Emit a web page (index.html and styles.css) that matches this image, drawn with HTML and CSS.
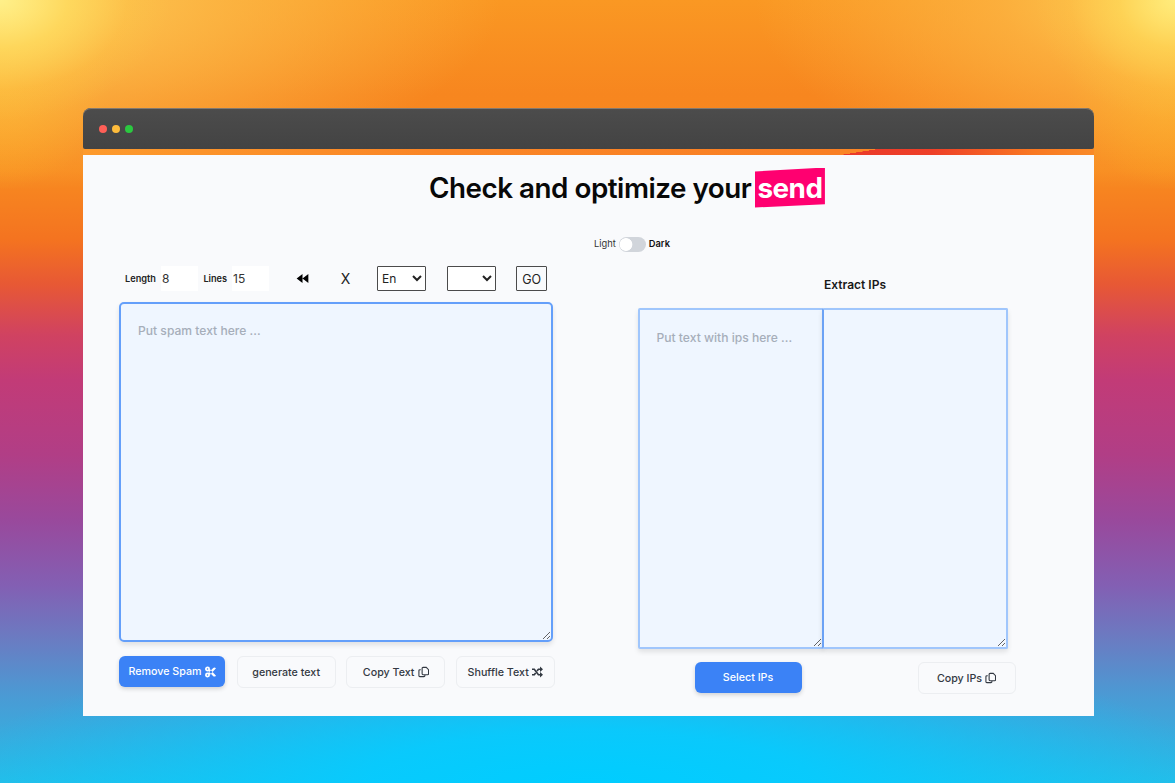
FILE: index.html
```html
<!DOCTYPE html>
<html lang="en">
<head>
<meta charset="utf-8">
<title>Check and optimize your send</title>
<link rel="stylesheet" href="styles.css">
</head>
<body>
<svg class="sprite" aria-hidden="true">
  <symbol id="copy" viewBox="0 0 24 24"><path d="M11 2h7l5 5v9a2 2 0 0 1-2 2H11a2 2 0 0 1-2-2V4a2 2 0 0 1 2-2zM6 7H4a2 2 0 0 0-2 2v11a2 2 0 0 0 2 2h9a2 2 0 0 0 2-2v-1" fill="none" stroke="currentColor" stroke-width="2.400"/></symbol>
  <symbol id="shuffle" viewBox="0 0 24 24"><path d="M0 6h5l9 12h5M0 18h5l3-4M11 10l3-4h5" fill="none" stroke="currentColor" stroke-width="3.600"/><path d="M17.500 0l6.500 6-6.500 6zM17.500 12l6.500 6-6.500 6z" fill="currentColor"/></symbol>
  <symbol id="scissors" viewBox="0 0 24 24"><g fill="none" stroke="currentColor" stroke-width="3.800"><circle cx="5.500" cy="5.500" r="3.500"/><circle cx="5.500" cy="18.500" r="3.500"/></g><path d="M6.500 9.500l4-4L24 20q-3 3.500-6 1zM6.500 14.500l4 4L24 4q-3-3.500-6-1z" fill="currentColor"/></symbol>
</svg>
<div class="window">
  <div class="titlebar"><i class="dot red"></i><i class="dot yellow"></i><i class="dot green"></i></div>
  <div class="gap"></div>
  <main class="page">
    <h1 class="title">Check and optimize your <span class="mark"><span>send</span></span></h1>
    <div class="theme"><span>Light</span><i class="switch"></i><b>Dark</b></div>
    <div class="columns">
      <section class="spam">
        <div class="tools">
          <label class="field length">Length<input value="8"></label>
          <label class="field lines">Lines<input value="15"></label>
          <svg class="rewind" viewBox="0 0 13 10"><path d="M6.500 0v10L0 5zM13 0v10L6.500 5z"/></svg>
          <span class="clear">X</span>
          <select class="lang"><option>En</option></select>
          <select class="kind"><option></option></select>
          <button class="go">GO</button>
        </div>
        <textarea class="area spam-area" placeholder="Put spam text here ..."></textarea>
        <div class="actions">
          <button class="btn primary">Remove Spam<svg><use href="#scissors"/></svg></button>
          <button class="btn">generate text</button>
          <button class="btn">Copy Text<svg><use href="#copy"/></svg></button>
          <button class="btn">Shuffle Text<svg><use href="#shuffle"/></svg></button>
        </div>
      </section>
      <section class="ips">
        <h2>Extract IPs</h2>
        <div class="pair">
          <textarea class="area" placeholder="Put text with ips here ..."></textarea><textarea class="area"></textarea>
        </div>
        <div class="actions">
          <button class="btn primary">Select IPs</button>
          <button class="btn">Copy IPs<svg><use href="#copy"/></svg></button>
        </div>
      </section>
    </div>
  </main>
</div>
</body>
</html>
```
FILE: styles.css
```css
* { box-sizing: border-box; }
body {
  margin: 0;
  height: 783px;
  padding: 108px 81px 0 83px;
  overflow: hidden;
  font-family: Inter, sans-serif;
  background:
    radial-gradient(ellipse 170px 120px at 0 0, #fff08a 0%, rgba(255,226,100,.65) 40%, rgba(255,205,70,.2) 75%, rgba(255,200,60,0) 100%),
    radial-gradient(ellipse 140px 120px at 100% 0, #ffec7c 0%, rgba(255,220,90,.6) 40%, rgba(255,200,70,.2) 75%, rgba(255,190,60,0) 100%),
    radial-gradient(ellipse 500px 190px at 0 0, rgba(253,208,92,.95), rgba(252,190,76,.75) 42%, rgba(250,160,50,0)),
    radial-gradient(ellipse 420px 190px at 100% 0, rgba(253,208,88,.95), rgba(252,182,68,.75) 42%, rgba(250,160,50,0)),
    radial-gradient(ellipse 110px 110px at 0 80px, rgba(255,190,32,.7), rgba(255,170,40,0)),
    radial-gradient(ellipse 110px 110px at 100% 80px, rgba(255,190,32,.7), rgba(255,170,40,0)),
    radial-gradient(ellipse 640px 150px at 50% 100%, #00cdff 0%, rgba(5,204,255,.9) 35%, rgba(20,195,245,0) 100%),
    linear-gradient(#fa9823 0, #f7861f 95px, #f88b20 170px, #f47320 240px, #e75835 285px, #d04261 335px, #c23b77 380px, #b13e86 455px, #99499c 520px, #835fb3 585px, #6a7cc2 640px, #4b9ad4 695px, #25bde8 783px);
}
.sprite { position: absolute; width: 0; height: 0; }
.titlebar {
  height: 41px;
  padding-left: 15.500px;
  display: flex;
  align-items: center;
  gap: 5px;
  border-radius: 8px 8px 2px 2px;
  background: linear-gradient(#4c4c4c, #434343);
  box-shadow: inset 0 1px #83796f;
}
.dot { width: 8px; height: 8px; border-radius: 50%; }
.red { background: #ff5f57; }
.yellow { background: #febc3c; }
.green { background: #2bc840; }
.gap {
  height: 6px;
  background:
    linear-gradient(171deg, #fa8526 0 50%, transparent 51%) 757px 0 / 38px 6px no-repeat,
    linear-gradient(90deg, #fd9a2c 0, #fa8526 35%, #f97f24 75%, #ea3a2a 75%, #ee3f28 84%, #f97822 94%, #f98a28);
}
.page { height: 561px; background: #f9fafc; padding: 8px 0 0 36px; }
.title {
  margin: 0 0 0 310px;
  height: 49px;
  display: flex;
  align-items: center;
  font-size: 27.800px;
  font-weight: 600;
  letter-spacing: -.48px;
  color: #080808;
  white-space: pre;
}
.mark {
  width: 70px;
  height: 40px;
  display: flex;
  align-items: center;
  justify-content: center;
  margin-left: -3px;
  background: #ff0070;
  clip-path: polygon(0 10%, 100% 0, 100% 92%, 0 100%);
  color: #fff;
  font-weight: 700;
}
.theme {
  display: flex;
  align-items: center;
  height: 16px;
  margin: 23px 0 0 475px;
  font-size: 9.300px;
  color: #333;
}
.theme b { font-weight: 600; color: #111; }
.switch {
  width: 27px;
  height: 15px;
  margin: 3px 3px 0 3px;
  border-radius: 8px;
  background: radial-gradient(circle at 7px 7.500px, #fff 0 6px, #d1d5db 6.700px);
}
.columns { display: flex; margin-top: 14px; }
.spam { width: 434px; }
.tools { display: flex; height: 26px; align-items: center; font-size: 12px; color: #222; }
.field { display: flex; align-items: center; font-size: 9.200px; font-weight: 600; color: #222; }
.length { margin-left: 6px; }
.lines { margin-left: 5.500px; }
.field input {
  width: 37px;
  height: 25px;
  margin-left: 5px;
  padding: 0 1px;
  border: 0;
  background: #fff;
  font: 12px Inter, sans-serif;
  color: #333;
}
.rewind { width: 13px; height: 9px; margin-left: 26.500px; fill: #000; }
.clear { width: 12px; margin-left: 31px; font-size: 14px; text-align: center; }
select, .go {
  height: 25px;
  margin: 0;
  border: 1px solid #4b4b4b;
  border-radius: 1px;
  font: 12.500px Inter, sans-serif;
  color: #222;
  background: #fff;
}
select { width: 49px; padding: 0; }
.lang { margin-left: 25.500px; font-size: 12px; }
.kind { margin-left: 20.500px; }
.go { width: 31px; margin-left: 20.500px; padding: 2px 0 0; background: #f9fafc; }
.area {
  display: block;
  width: 186px;
  height: 341px;
  padding: 20px 17px;
  border: 2px solid #a0c6fc;
  border-radius: 2px;
  background: #eff6ff;
  font: 500 12.100px/16px Inter, sans-serif;
  box-shadow: 0 3px 5px rgba(0,0,0,.1);
  outline: none;
}
.area::placeholder { color: #a6aeba; }
.spam-area {
  width: 434px;
  height: 340px;
  margin-top: 11px;
  padding: 19px 17px;
  border: 2px solid #649ffa;
  border-radius: 5px;
}
.actions { display: flex; margin-top: 14px; }
.btn {
  width: 99px;
  height: 32px;
  padding: 0;
  display: flex;
  align-items: center;
  justify-content: center;
  border: 1px solid #eceef1;
  border-radius: 6px;
  background: #f9fafc;
  font: 500 10.700px Inter, sans-serif;
  color: #333942;
}
.btn svg { width: 11px; height: 12px; margin-left: 3px; }
.primary {
  width: 107px;
  height: 31px;
  border: 0;
  background: #3b82f6;
  color: #fff;
  box-shadow: 0 2px 4px rgba(0,0,0,.16);
}
.spam .primary { width: 106px; }
.spam .btn { flex: none; }
.spam .btn + .btn { margin-left: 10.500px; }
.spam .primary + .btn { margin-left: 11.700px; }
.ips { width: 380px; margin-left: 84.500px; }
.ips h2 { margin: 11px 0 0 186.500px; font-size: 12px; line-height: 18px; font-weight: 600; color: #181818; }
.pair { display: flex; margin-top: 14px; }
.pair .area + .area { margin-left: -2px; border-left-color: #6ba2f5; }
.ips .actions { margin-top: 13px; }
.ips .primary { margin-left: 57px; }
.ips .primary + .btn { margin-left: 116px; width: 98px; }
```
